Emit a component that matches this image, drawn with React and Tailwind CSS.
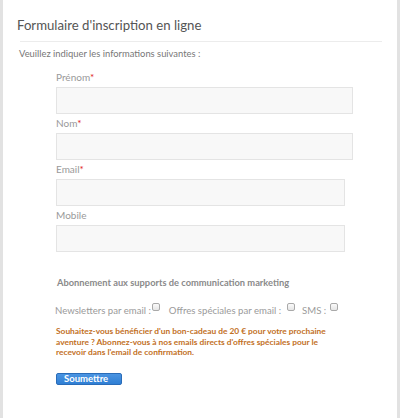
function Star() {
  return <span className="text-[#e02020]">*</span>;
}

function Box({ extra = "" }) {
  return (
    <span
      className={`inline-block w-[8px] h-[8px] border border-[#a9a9a9] rounded-[2px] bg-gradient-to-b from-[#fafafa] to-[#e6e6e6] align-[3px] ${extra}`}
    />
  );
}

function Field({ label, required, wide, first }) {
  return (
    <>
      <label className={`text-[10px] leading-[13px] text-[#999] ${first ? "" : "mt-[3px]"}`}>
        {label}
        {required && <Star />}
      </label>
      <div
        className={`mt-[3px] h-[27px] border border-[#e4e4e4] bg-[#f8f8f8] ${wide ? "w-[297px]" : "w-[289px]"}`}
      />
    </>
  );
}

export default function App() {
  return (
    <div className="w-[400px] h-[418px] bg-[#e2e2e2] px-[3px] [font-family:Lato,sans-serif]">
      <div className="h-full bg-white pt-[16px]">
        <h1 className="ml-[14px] text-[13.2px] leading-[18px] text-[#555]">Formulaire d'inscription en ligne</h1>
        <div className="mt-[7px] ml-[17px] w-[362px] h-px bg-[#ececec]" />
        <p className="mt-[5px] ml-[16px] text-[9.4px] leading-[14px] text-[#777]">
          Veuillez indiquer les informations suivantes :
        </p>
        <div className="ml-[53px] mt-[10px] flex flex-col items-start">
          <Field label="Prénom" required wide first />
          <Field label="Nom" required wide />
          <Field label="Email" required />
          <Field label="Mobile" />
          <p className="mt-[25px] ml-[1px] text-[9.3px] leading-[12px] font-bold text-[#8a8a8a]">
            Abonnement aux supports de communication marketing
          </p>
          <div className="mt-[14px] -ml-[1px] text-[9.6px] leading-[13px] text-[#9a9a9a] whitespace-nowrap">
            <span>Newsletters par email :</span>
            <Box extra="ml-[1px]" />
            <span className="ml-[9px]">Offres spéciales par email :</span>
            <Box extra="ml-[6px]" />
            <span className="ml-[7px]">SMS :</span>
            <Box extra="ml-[4px]" />
          </div>
          <p className="mt-[9px] text-[8.4px] leading-[10.5px] font-bold text-[#c2701e] whitespace-nowrap">
            Souhaitez-vous bénéficier d'un bon-cadeau de 20 € pour votre prochaine
            <br />
            aventure ? Abonnez-vous à nos emails directs d'offres spéciales pour le
            <br />
            recevoir dans l'email de confirmation.
          </p>
          <button className="mt-[15px] w-[66px] h-[12px] rounded-[2px] bg-gradient-to-b from-[#4a94e2] to-[#2f7fd4] border border-[#2a6cb8] text-white text-[9.5px] leading-[10px] font-bold text-left pl-[7px]">
            Soumettre
          </button>
        </div>
      </div>
    </div>
  );
}
